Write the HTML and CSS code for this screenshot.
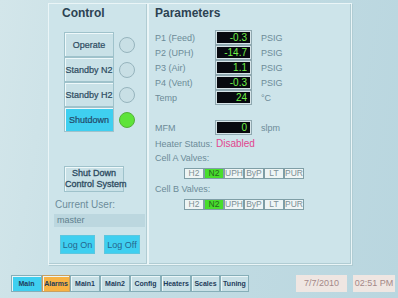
FILE: index.html
```html
<!DOCTYPE html>
<html lang="en">
<head>
    <meta charset="UTF-8">
    <title>Control Panel</title>
    <link rel="stylesheet" href="styles.css">
</head>
<body>
    <div class="screen">
        <div class="panels">
            <div class="panel control">
                <div class="title">Control</div>
                <div class="modes">
                    <div class="mode-row"><button class="btn mode">Operate</button><span class="lamp"></span></div>
                    <div class="mode-row"><button class="btn mode">Standby N2</button><span class="lamp"></span></div>
                    <div class="mode-row"><button class="btn mode">Standby H2</button><span class="lamp"></span></div>
                    <div class="mode-row"><button class="btn mode active">Shutdown</button><span class="lamp on"></span></div>
                </div>
                <button class="btn shutdown-all">Shut Down<br>Control System</button>
                <div class="user-label">Current User:</div>
                <div class="user-box">master</div>
                <div class="log-row">
                    <button class="btn log">Log On</button>
                    <button class="btn log off">Log Off</button>
                </div>
            </div>
            <div class="panel params">
                <div class="title">Parameters</div>
                <div class="readings">
                    <div class="row"><span class="label">P1 (Feed)</span><span class="value">-0.3</span><span class="unit">PSIG</span></div>
                    <div class="row"><span class="label">P2 (UPH)</span><span class="value">-14.7</span><span class="unit">PSIG</span></div>
                    <div class="row"><span class="label">P3 (Air)</span><span class="value">1.1</span><span class="unit">PSIG</span></div>
                    <div class="row"><span class="label">P4 (Vent)</span><span class="value">-0.3</span><span class="unit">PSIG</span></div>
                    <div class="row"><span class="label">Temp</span><span class="value">24</span><span class="unit">°C</span></div>
                </div>
                <div class="row mfm"><span class="label">MFM</span><span class="value">0</span><span class="unit">slpm</span></div>
                <div class="row status"><span class="label">Heater Status:</span><span class="disabled">Disabled</span></div>
                <div class="label valves-label">Cell A Valves:</div>
                <div class="valves">
                    <span class="valve">H2</span><span class="valve open">N2</span><span class="valve">UPH</span><span class="valve">ByP</span><span class="valve">LT</span><span class="valve">PUR</span>
                </div>
                <div class="label valves-label">Cell B Valves:</div>
                <div class="valves">
                    <span class="valve">H2</span><span class="valve open">N2</span><span class="valve">UPH</span><span class="valve">ByP</span><span class="valve">LT</span><span class="valve">PUR</span>
                </div>
            </div>
        </div>
        <div class="footer">
            <div class="tabs">
                <span class="tab current">Main</span>
                <span class="tab alarm">Alarms</span>
                <span class="tab">Main1</span>
                <span class="tab">Main2</span>
                <span class="tab">Config</span>
                <span class="tab">Heaters</span>
                <span class="tab">Scales</span>
                <span class="tab">Tuning</span>
            </div>
            <span class="clock date">7/7/2010</span>
            <span class="clock time">02:51 PM</span>
        </div>
    </div>
</body>
</html>
```

FILE: styles.css
```css
/* HMI main screen */
body {
    margin: 0;
    width: 398px;
    height: 298px;
    overflow: hidden;
    font-family: 'Liberation Sans', Arial, sans-serif;
    background: linear-gradient(100deg, #d3e6ea 0%, #c4dde4 40%, #b9d6df 100%);
}

.screen {
    padding: 3px 0 0 0;
}

.panels {
    display: flex;
    margin-left: 48px;
    height: 262px;
}

.panel {
    box-sizing: border-box;
    height: 262px;
    background-color: #cde4ea;
    border: 1px solid #eaf5f7;
    box-shadow: inset -1px -1px 0 #b0ccd3, 1px 1px 0 #b0ccd3;
}

.control {
    width: 100px;
    padding: 2px 0 0 0;
}

.params {
    width: 204px;
    padding: 2px 0 0 6px;
}

.title {
    font-size: 12px;
    line-height: 14px;
    font-weight: bold;
    color: #2c4252;
}

.control .title {
    padding-left: 13px;
}

.btn {
    font-family: inherit;
    box-sizing: border-box;
    padding: 0;
    margin: 0;
    white-space: nowrap;
    cursor: pointer;
    color: #2c4a60;
    border: 1px solid #9fc2cb;
    box-shadow: inset 1px 1px 0 #eef8fa;
    background-color: #c9e1e7;
}

.modes {
    margin: 12px 0 0 15px;
    display: flex;
    flex-direction: column;
}

.mode-row {
    display: flex;
    align-items: center;
    gap: 5px;
    height: 25px;
}

.mode {
    width: 50px;
    height: 25px;
    font-size: 9px;
    -webkit-text-stroke: 0.2px #2c4a60;
}

.mode.active {
    background-color: #3fcff0;
    color: #1c4870;
}

.lamp {
    box-sizing: border-box;
    width: 16px;
    height: 16px;
    border-radius: 50%;
    border: 1px solid #96b4bd;
    background-color: #c8dfe5;
}

.lamp.on {
    background-color: #5ee43a;
    border-color: #54b03a;
}

.shutdown-all {
    display: block;
    margin: 34px 0 0 15px;
    width: 60px;
    height: 26px;
    font-size: 9px;
    line-height: 11px;
    -webkit-text-stroke: 0.3px #2c4a60;
}

.user-label {
    margin: 6px 0 0 6px;
    font-size: 10px;
    line-height: 13px;
    color: #6c8c9a;
}

.user-box {
    box-sizing: border-box;
    margin: 3px 0 0 5px;
    width: 91px;
    height: 13px;
    padding-left: 3px;
    font-size: 9px;
    line-height: 13px;
    color: #5f7f8e;
    background-color: #bcd7df;
}

.log-row {
    display: flex;
    gap: 9px;
    margin: 8px 0 0 11px;
}

.log {
    width: 35px;
    height: 19px;
    font-size: 9px;
    background-color: #3fcff0;
    color: #26668e;
    border-color: #5cc7df;
    box-shadow: none;
}

.log.off {
    width: 36px;
}

.readings {
    margin-top: 11px;
    display: flex;
    flex-direction: column;
    gap: 2px;
}

.row {
    display: flex;
    align-items: center;
    height: 13px;
}

.label {
    width: 61px;
    font-size: 9px;
    white-space: nowrap;
    color: #6c8b98;
}

.value {
    box-sizing: border-box;
    width: 35px;
    height: 13px;
    padding-right: 3px;
    text-align: right;
    font-size: 10px;
    line-height: 11px;
    color: #70f048;
    background-color: #07090f;
    border: 1px solid #d6e4e8;
    outline: 1px solid #8fa8b0;
}

.unit {
    margin-left: 10px;
    font-size: 9px;
    color: #6c8b98;
}

.mfm {
    margin-top: 17px;
}

.status {
    margin-top: 3px;
}

.disabled {
    font-size: 10px;
    color: #e2448e;
}

.valves-label {
    width: auto;
    margin-top: 2px;
    line-height: 13px;
}

.valves {
    display: flex;
    margin: 3px 0 4px 29px;
}

.valve {
    box-sizing: border-box;
    width: 20px;
    height: 11px;
    font-size: 8.5px;
    line-height: 9px;
    text-align: center;
    color: #7d9096;
    background-color: #eef5f5;
    border: 1px solid #7f9ea6;
}

.valve.open {
    background-color: #48de2c;
    color: #276220;
}

.footer {
    display: flex;
    align-items: center;
    margin-top: 10px;
    padding-left: 11px;
}

.tabs {
    display: flex;
    width: 285px;
}

.tab {
    box-sizing: border-box;
    height: 17px;
    padding: 0;
    font-size: 7px;
    font-weight: bold;
    line-height: 15px;
    white-space: nowrap;
    text-align: center;
    color: #1e3c5a;
    background-color: #c8e0e6;
    border: 1px solid #86aeb8;
    box-shadow: inset 1px 1px 0 #eaf6f8;
}

.tab:nth-child(1) { width: 31px; }
.tab:nth-child(2) { width: 28px; }
.tab:nth-child(3) { width: 30px; }
.tab:nth-child(4) { width: 30px; }
.tab:nth-child(5) { width: 31px; }
.tab:nth-child(6) { width: 30px; }
.tab:nth-child(7) { width: 29px; }
.tab:nth-child(8) { width: 29px; }

.tab.current {
    background-color: #3fcff0;
}

.tab.alarm {
    background-color: #f7b243;
    border-color: #c9a060;
}

.clock {
    box-sizing: border-box;
    height: 17px;
    font-size: 9px;
    line-height: 17px;
    text-align: center;
    color: #a48888;
    background-color: #efe6e2;
}

.date {
    width: 51px;
}

.time {
    width: 42px;
    margin-left: 6px;
}
```
